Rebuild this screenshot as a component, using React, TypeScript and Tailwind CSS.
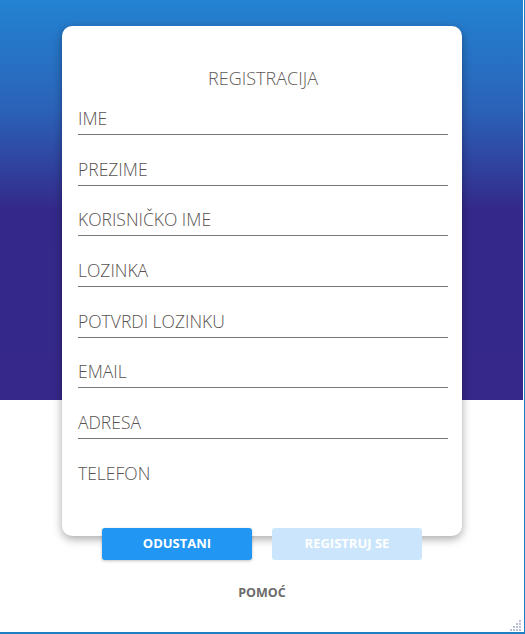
import React from 'react'

const fields = ['IME', 'PREZIME', 'KORISNIČKO IME', 'LOZINKA', 'POTVRDI LOZINKU', 'EMAIL', 'ADRESA', 'TELEFON']

function ResizeGrip() {
  // little dotted corner of the window
  const dots = [
    [9, 1],
    [6, 4], [9, 4],
    [3, 7], [6, 7], [9, 7],
    [0, 10], [3, 10], [6, 10], [9, 10],
  ]
  return (
    <svg width="12" height="12" viewBox="0 0 12 12" className="absolute right-[2px] bottom-[1px]">
      {dots.map(([x, y]) => (
        <rect key={`${x}-${y}`} x={x} y={y} width="2" height="2" fill="#b9c2d6" />
      ))}
    </svg>
  )
}

export default function App() {
  return (
    <div
      className="relative w-[525px] h-[634px] overflow-hidden bg-white border-r border-b-2 border-[#1f7fc3]"
      style={{ fontFamily: '"Open Sans", "Noto Sans", sans-serif' }}
    >
      <div className="relative h-full w-[524px]">
        {/* Background band */}
        <div className="absolute left-0 top-0 w-[523px] h-[400px] bg-[linear-gradient(to_bottom,#2383d2_0px,#2b62b8_110px,#34298a_210px,#35288a_400px)]" />

        <div className="relative flex flex-col items-center pt-[26px]">
          {/* Card */}
          <div className="w-[400px] h-[510px] bg-white rounded-[10px] shadow-[0_3px_10px_rgba(0,0,0,0.35)] pt-[40px] pl-4 pr-[14px]">
            <h1 className="text-center text-[18px] leading-[24px] font-light text-[#5f5a58]">
              REGISTRACIJA
            </h1>
            <div className="flex flex-col mt-[16px] gap-[21.67px]">
              {fields.map((f, i) => (
                <div
                  key={f}
                  className={`pb-[4px] text-[17.5px] leading-[24px] font-light text-[#57524f] ${
                    i < fields.length - 1 ? 'border-b border-[#777]' : ''
                  }`}
                >
                  {f}
                </div>
              ))}
            </div>
          </div>

          {/* Buttons */}
          <div className="relative z-10 -mt-[8px] flex gap-5">
            <button className="w-[150px] h-[32px] rounded-[3px] bg-[#2196f3] text-white text-[13px] font-bold shadow-[0_1px_3px_rgba(0,0,0,0.25)]">
              ODUSTANI
            </button>
            <button disabled className="w-[150px] h-[32px] rounded-[3px] bg-[#cbe6fc] text-white text-[13px] font-bold">
              REGISTRUJ SE
            </button>
          </div>

          <button className="mt-[24px] text-[12.5px] font-bold text-[#6b6b6b]">POMOĆ</button>
        </div>

        <ResizeGrip />
      </div>
    </div>
  )
}
